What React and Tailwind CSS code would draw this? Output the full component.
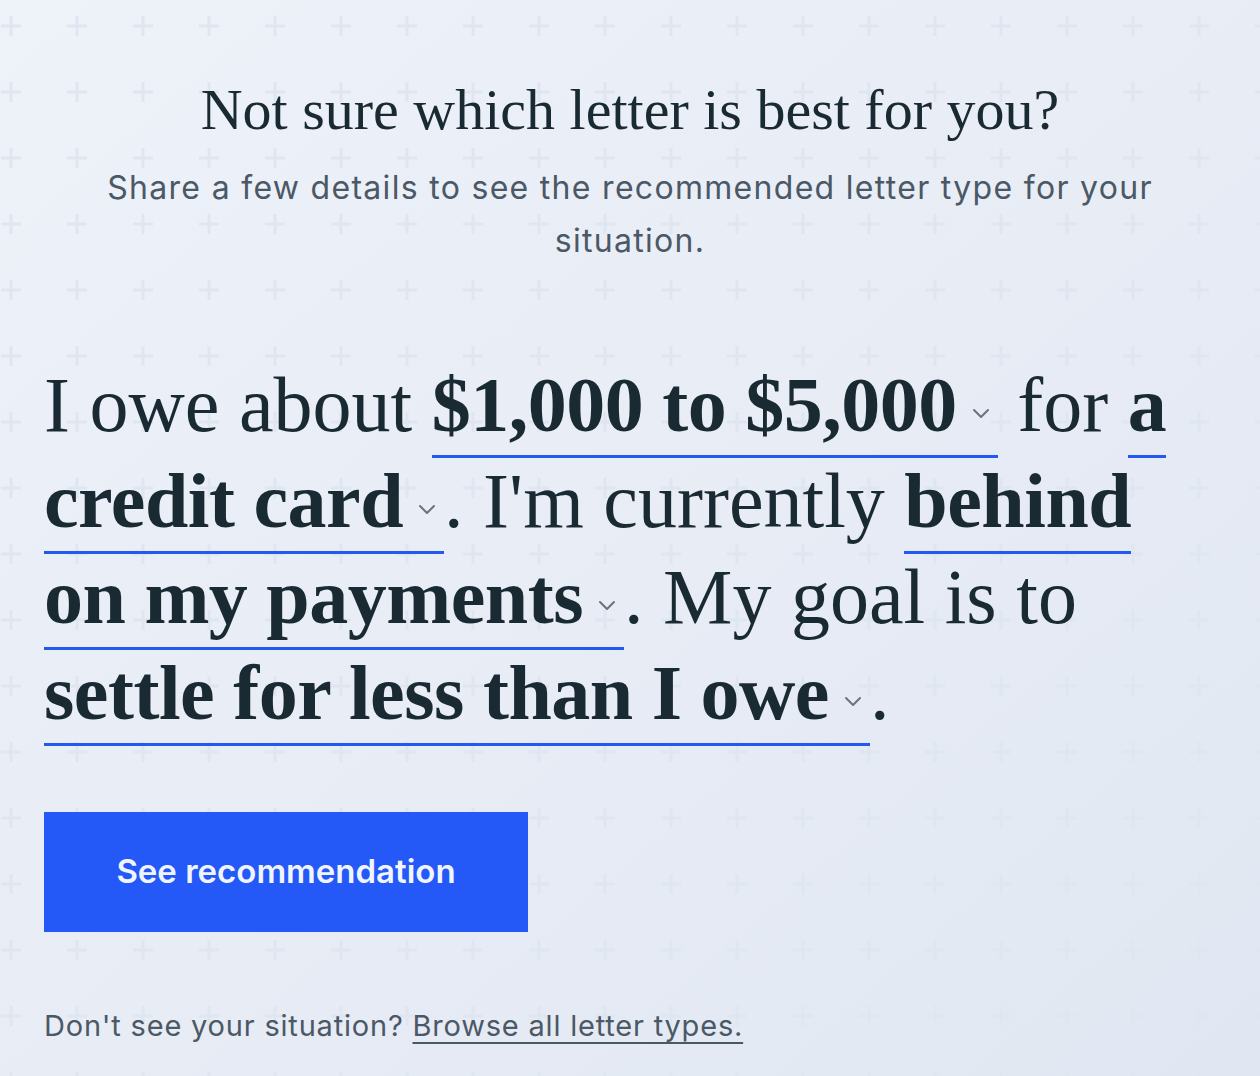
import React from 'react';

const serif = { fontFamily: '"Liberation Serif", "Times New Roman", serif' };

function Chevron() {
  return (
    <svg
      width="20"
      height="12"
      viewBox="0 0 20 12"
      className="inline-block align-baseline ml-[14px] mr-[7px] mb-[12px]"
      fill="none"
    >
      <path d="M3 3l7 7 7-7" stroke="#6b7280" strokeWidth="2" strokeLinecap="round" strokeLinejoin="round" />
    </svg>
  );
}

function Pick({ children }) {
  return (
    <span className="font-bold tracking-[-0.5px] border-b-[3px] border-[#2458f5] pb-[7px] cursor-pointer">
      {children}
    </span>
  );
}

export default function App() {
  return (
    <div className="relative min-h-screen overflow-hidden bg-gradient-to-br from-[#eef2f9] to-[#e1e7f2] font-['Inter',sans-serif]">
      {/* plus pattern */}
      <svg className="absolute inset-0 w-full h-full pointer-events-none" aria-hidden="true">
        <defs>
          <pattern id="plus" x="-22" y="-7" width="66" height="66" patternUnits="userSpaceOnUse">
            <path d="M23 33h20M33 23v20" stroke="#dfe6f0" strokeWidth="3" />
          </pattern>
        </defs>
        <rect width="100%" height="100%" fill="url(#plus)" />
      </svg>

      <div className="relative px-[44px] pt-[75px]">
        {/* Header */}
        <h1 style={serif} className="text-center text-[58px] leading-[70px] text-[#1a2a33]">
          Not sure which letter is best for you?
        </h1>
        <p className="mt-[16px] text-center text-[32px] leading-[53px] tracking-[1.3px] text-[#4b5866]">
          Share a few details to see the recommended letter type for your situation.
        </p>

        {/* Sentence builder */}
        <p style={serif} className="mt-[90px] text-[78px] leading-[96px] text-[#1a2a33] whitespace-nowrap">
          I owe about <Pick>$1,000 to $5,000<Chevron /></Pick> for <Pick>a<br />credit card<Chevron /></Pick>. I'm currently <Pick>behind<br />on my payments<Chevron /></Pick>. My goal is to
          <br />
          <Pick>settle for less than I owe<Chevron /></Pick>.
        </p>

        <button className="mt-[71px] block w-[484px] h-[120px] bg-[#2459f8] text-[#f0f4fc] text-[33px] font-semibold">
          See recommendation
        </button>

        <p className="mt-[74px] text-[29px] leading-[40px] tracking-[0.8px] text-[#4b5866]">
          Don't see your situation?{' '}
          <a href="#" className="underline decoration-2 underline-offset-[6px]">Browse all letter types.</a>
        </p>
      </div>
    </div>
  );
}
